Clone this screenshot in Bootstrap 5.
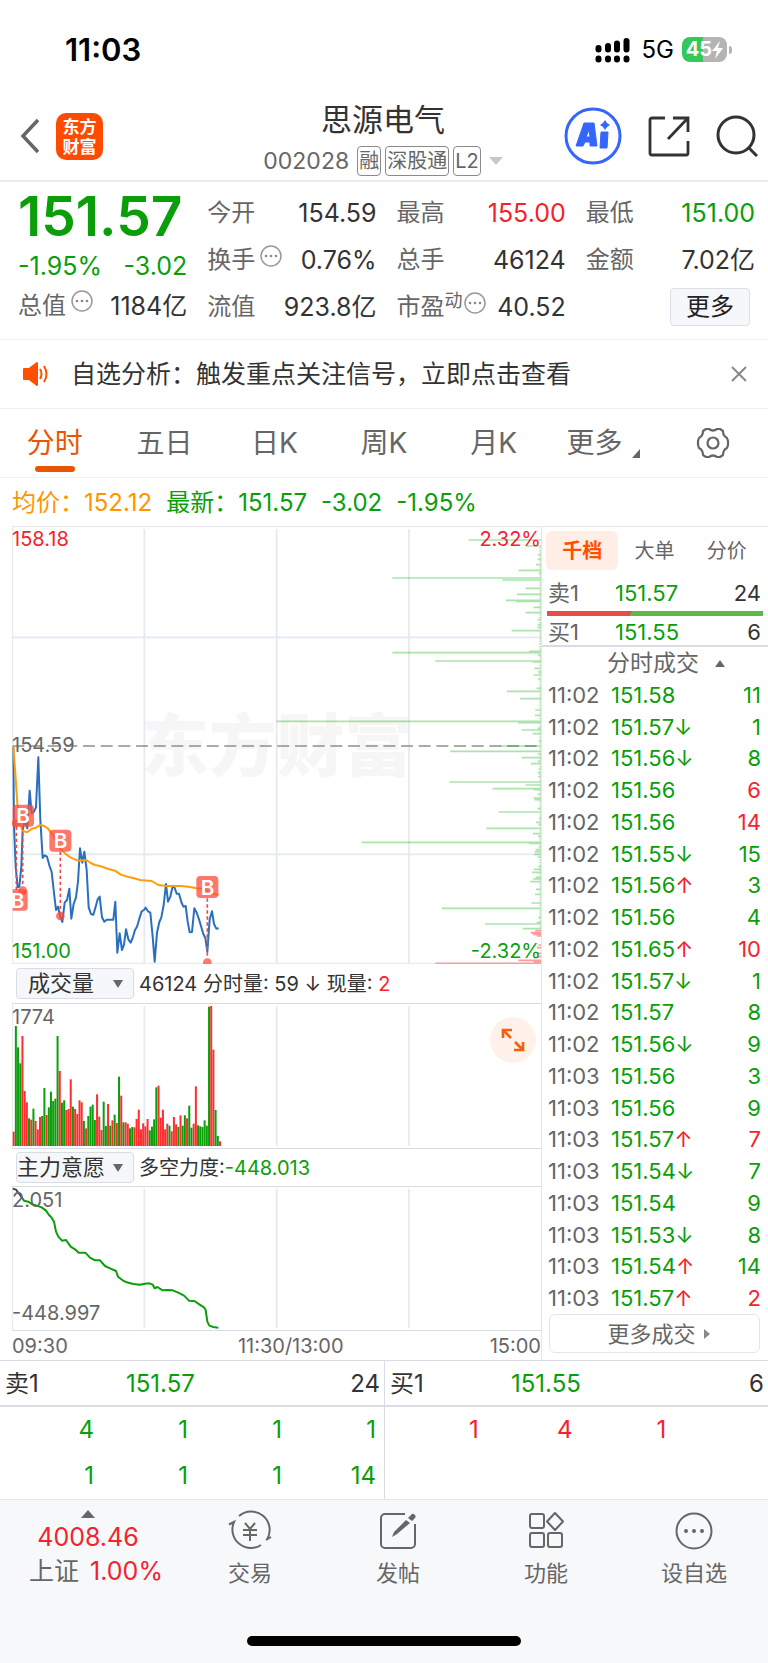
<!DOCTYPE html>
<html lang="zh-CN">
<head>
<meta charset="utf-8">
<meta name="viewport" content="width=device-width, initial-scale=1">
<title>思源电气 002028</title>
<link href="https://cdn.jsdelivr.net/npm/bootstrap@5.3.0/dist/css/bootstrap.min.css" rel="stylesheet">
<style>
:root{--up:#f5222d;--down:#0a9e0a;--ink:#333;--mute:#666;--line:#e3e6ec;--rule:#d9dce3;--brand:#ff5000}
body{font-family:Inter,"Noto Sans CJK SC",sans-serif;color:var(--ink);background:#fff;font-size:24px;line-height:32px}
svg{display:block;flex:none}
button,select{font-family:inherit;color:inherit}
a{color:inherit;text-decoration:none}
.up{color:var(--up)}.down{color:var(--down)}.mute{color:var(--mute)}
.plain{background:none;border:0;padding:0}
.statusbar{height:96px;padding:3px 36px 0 65px;color:#000}
.clock{font-size:31px;font-weight:600}
.batt{width:45px;height:25px;border-radius:8px;background:linear-gradient(90deg,#34c759 46%,#b4b4b4 46%);color:#fff;font-size:20px;font-weight:700;line-height:25px}
.nub{width:3px;height:8px;margin-left:2px;border-radius:0 3px 3px 0;background:#b4b4b4}
.titlebar{height:86px;border-bottom:2px solid #ececec;padding:0 10px 0 20px}
.applogo{width:47px;height:47px;border-radius:10px;background:#ff4a00;color:#fff;font-family:"Noto Sans CJK SC",sans-serif;font-weight:700;font-size:17px;line-height:20px;padding-top:3px;text-align:center}
.side{padding-bottom:4px}
.side-l{width:182px}
.side-r{width:194px}
.stock{font-size:31px;line-height:40px;font-weight:400;margin:0 0 5px}
.sub{font-size:23px;line-height:32px;color:#666}
.tag{border:1px solid #8a8a8a;border-radius:4px;font-size:20px;line-height:28px;padding:0 1px}
.tri-d{border:7px solid transparent;border-top:8px solid #c8c8c8;border-bottom:0}
.quote{padding:7px 13px 9px 18px;display:grid;grid-template-columns:repeat(4,1fr);column-gap:20px;border-bottom:1px solid #eee}
.quote .cell{height:47px;display:flex;align-items:center;justify-content:space-between;white-space:nowrap;font-size:25px}
.quote .cell>span:first-child{font-size:24px;color:var(--mute);display:flex}
.price{font-size:55px;font-weight:600;line-height:54px;height:54px}
.chg{height:46px;font-size:25px;line-height:46px}
.quote .cap{height:41px;line-height:34px;align-items:flex-start}
.sup{font-size:18px;line-height:20px}
.more{width:80px;height:38px;background:#f6f7fa;border:1px solid #dcdfe6;border-radius:4px;font-size:24px;line-height:34px;margin-right:5px;color:#222}
.notice{height:69px;padding:0 20px 0 22px;border-bottom:1px solid #eee;font-size:25px}
.notice a{margin-left:20px}
.periods{height:69px;border-bottom:1px solid #eee}
.periods>*{flex:1 1 0;font-size:28px;color:var(--mute);position:relative}
.periods>.on{color:#ea5504}
.periods>.on::after{content:"";position:absolute;left:50%;bottom:5px;width:40px;height:6px;margin-left:-20px;border-radius:3px;background:#ea5504}
.corner{border-left:8px solid transparent;border-bottom:9px solid #666;margin:20px 0 0 10px}
.legendline{height:48px;padding:2px 0 0 12px;gap:14px}
.panel{width:227px;flex:none;border:1px solid var(--line);border-width:1px 0 0 1px;font-size:22px}
.plot{position:relative;margin-left:12px}
.plot .lab{position:absolute;inset:0;display:flex;flex-direction:column;justify-content:space-between;font-size:20px;line-height:26px;pointer-events:none}
.toolrow{height:40px;border-bottom:1px solid var(--rule);margin-left:12px;padding-left:4px;font-size:20px;white-space:pre}
.toolrow.second{height:39px;border-top:1px solid var(--rule)}
.pick{position:relative;margin-right:5px}
.pick select{appearance:none;display:block;width:118px;height:31px;border:1px solid var(--rule);border-radius:4px;background:#f6f7fa;font-size:22px;line-height:29px;padding:0 28px 0 0;text-align-last:center}
.pick::after{content:"";position:absolute;right:11px;top:12px;border:5px solid transparent;border-top:8px solid #666;border-bottom:0;pointer-events:none}
.zoombtn{position:absolute;right:5px;top:13px;width:46px;height:46px;border-radius:50%;background:#fdf1ea;display:flex;align-items:center;justify-content:center}
.axis{height:30px;border-top:1px solid var(--rule);margin-left:12px;font-size:20px;line-height:30px;color:var(--mute)}
.ptabs{padding:4px 5px 4px 4px}
.ptabs button{flex:1;height:39px;font-size:20px;border-radius:6px;color:var(--mute)}
.ptabs .on{background:#ffeee5;color:var(--brand);font-weight:700}
.lvl{height:37px;padding:0 7px 0 6px;display:grid;grid-template-columns:67px 1fr auto;align-items:center}
.lvl-b{height:31px;border-bottom:2px solid var(--rule)}
.force{height:5px;margin:0 5px;background:linear-gradient(120deg,#e94b4b 39%,#5dba47 39%)}
.tickhead{height:32px;font-size:23px;padding-left:22px}
.ticks{width:100%;height:635px;border-collapse:collapse}
.ticks td{padding:0;line-height:24px;white-space:nowrap}
.ticks td:nth-child(1){padding-left:6px;width:69px;color:var(--mute)}
.ticks td:nth-child(3){padding-right:7px;text-align:right}
.moretick{height:39px;margin:0 7px 7px;border:1px solid var(--line);border-radius:6px;width:211px;color:var(--mute);padding-left:8px}
.book{border-top:1px solid var(--rule)}
.book>div+div{border-left:1px solid var(--rule)}
.bookhead{height:46px;padding:2px 4px 0 5px;border-bottom:2px solid var(--rule);display:grid;grid-template-columns:121px 1fr auto;align-items:center}
.lots{display:grid;grid-template-columns:repeat(4,1fr);padding-right:8px;text-align:right;line-height:46px;height:92px}
.dock{background:#f7f8fa;border-top:1px solid var(--line);height:164px;position:relative}
.dock a{flex:1;font-size:22px;line-height:32px;color:var(--mute);text-align:center;padding-top:10px}
.dock a.idx{flex:0 0 176px;font-size:25px;line-height:34px}
.idx svg{margin:0 auto 2px}
.dock .ic{margin:0 auto 5px}
.homebar{position:absolute;left:50%;bottom:17px;width:274px;height:10px;margin-left:-137px;border-radius:5px;background:#000}
</style>
</head>
<body>
<header>
  <div class="statusbar d-flex align-items-center justify-content-between">
    <span class="clock">11:03</span>
    <div class="d-flex align-items-center">
      <svg width="35" height="26" viewBox="0 0 35 26"><path d="M3.500 11v1.500M13 9v3.500M22 6.500v6M31.500 4v8.500M3.500 21.500v1M13 21.500v1M22 21.500v1M31.500 21.500v1" stroke="#000" stroke-width="6" stroke-linecap="round"/></svg>
      <span class="ms-2 me-2 ps-1">5G</span>
      <span class="batt d-flex align-items-center justify-content-center">45<svg width="11" height="18" viewBox="0 0 11 18"><path d="M8 0L0 10h5L3 18l8-11H6z" fill="#fff"/></svg></span><span class="nub"></span>
    </div>
  </div>
  <div class="titlebar d-flex align-items-center justify-content-between">
    <div class="side side-l d-flex align-items-center">
      <button class="plain" aria-label="返回"><svg width="20" height="36" viewBox="0 0 20 36"><path d="M18 2L3 18l15 16" fill="none" stroke="#666" stroke-width="3.500"/></svg></button>
      <a href="#" class="applogo ms-3">东方<br>财富</a>
    </div>
    <div class="text-center">
      <h1 class="stock">思源电气</h1>
      <div class="sub d-flex align-items-center"><span class="me-2">002028</span><span class="tag me-1">融</span><span class="tag me-1">深股通</span><span class="tag">L2</span><span class="tri-d ms-2"></span></div>
    </div>
    <div class="side side-r d-flex align-items-center justify-content-between">
      <button class="plain" aria-label="Ai"><svg width="58" height="58" viewBox="0 0 58 58"><circle cx="29" cy="29" r="27" fill="#fff" stroke="#3366ff" stroke-width="3"/><path d="M20 16h10l3 23h-7v-4h-5l-2 4h-7zM25 23l-3 7h4z" fill="#3366ff" fill-rule="evenodd" stroke="#3366ff" stroke-linejoin="round"/><path d="M37 25h7l-1 16h-7z" fill="#3366ff" stroke="#3366ff" stroke-linejoin="round"/><path d="M41 13l2 3 3 2-3 2-2 3-2-3-3-2 3-2z" fill="#3366ff"/></svg></button>
      <button class="plain" aria-label="分享"><svg width="42" height="42" viewBox="0 0 42 42"><path d="M17 3H4a2 2 0 0 0-2 2v33a2 2 0 0 0 2 2h34a2 2 0 0 0 2-2V26M20 24L39 4M25 3h15v14" fill="none" stroke="#333" stroke-width="2.800"/></svg></button>
      <button class="plain" aria-label="搜索"><svg width="42" height="42" viewBox="0 0 42 42"><g fill="none" stroke="#333" stroke-width="3"><circle cx="20" cy="20" r="18"/><path d="M32 32l9 9"/></g></svg></button>
    </div>
  </div>
</header>
<main>
  <section class="quote">
    <div>
      <div class="price down">151.57</div>
      <div class="chg down d-flex justify-content-between"><span>-1.95%</span><span>-3.02</span></div>
      <div class="cell cap"><span>总值<svg class="ms-1" width="24" height="24" viewBox="0 0 24 24"><use href="#dots"/></svg></span><span>1184亿</span></div>
    </div>
    <div>
      <div class="cell"><span>今开</span><span>154.59</span></div>
      <div class="cell"><span>换手<svg class="ms-1" width="24" height="24" viewBox="0 0 24 24"><use href="#dots"/></svg></span><span>0.76%</span></div>
      <div class="cell"><span>流值</span><span>923.8亿</span></div>
    </div>
    <div>
      <div class="cell"><span>最高</span><span class="up">155.00</span></div>
      <div class="cell"><span>总手</span><span>46124</span></div>
      <div class="cell"><span>市盈<span class="sup">动</span><svg width="24" height="24" viewBox="0 0 24 24"><use href="#dots"/></svg></span><span>40.52</span></div>
    </div>
    <div>
      <div class="cell"><span>最低</span><span class="down">151.00</span></div>
      <div class="cell"><span>金额</span><span>7.02亿</span></div>
      <div class="cell justify-content-end"><button class="more p-0">更多</button></div>
    </div>
  </section>

  <section class="notice d-flex align-items-center">
    <svg width="29" height="26" viewBox="0 0 29 26"><path d="M2 8h5l8-6v22l-8-6H2z" fill="#ff5000" stroke="#ff5000" stroke-width="2" stroke-linejoin="round"/><path d="M18 8q3 5 0 10M22 5q5 8 0 16" fill="none" stroke="#ff5000" stroke-width="2"/></svg>
    <a href="#" class="flex-grow-1">自选分析：触发重点关注信号，立即点击查看</a>
    <button class="plain" aria-label="关闭"><svg width="18" height="18" viewBox="0 0 18 18"><path d="M2 2l14 14M16 2L2 16" stroke="#888" stroke-width="2"/></svg></button>
  </section>

  <nav class="periods d-flex">
    <button class="plain on">分时</button><button class="plain">五日</button><button class="plain">日K</button><button class="plain">周K</button><button class="plain">月K</button>
    <button class="plain d-flex align-items-center justify-content-center">更多<span class="corner"></span></button>
    <button class="plain d-flex align-items-center justify-content-center" aria-label="设置"><svg width="34" height="32" viewBox="0 0 34 32"><g fill="none" stroke="#666" stroke-width="2.200" stroke-linejoin="round"><path d="M10 2h3q4 3 8 0h3l3 2q0 5 4 7l1 3v4l-1 3q-4 2-4 7l-3 2h-3q-4-3-8 0h-3l-3-2q0-5-4-7l-1-3v-4l1-3q4-2 4-7z"/><circle cx="17" cy="16" r="5.500"/></g></svg></button>
  </nav>

  <div class="legendline d-flex align-items-center down"><span style="color:#ff9500">均价：152.12</span><span>最新：151.57</span><span>-3.02</span><span>-1.95%</span></div>

  <div class="d-flex">
    <div class="flex-grow-1">
      <div class="plot">
        <svg class="w-100" viewBox="36 18 1587 1314">
          <g stroke="#e4e8f0" stroke-width="5" fill="none"><path d="M433 27V1330M830 27V1330M1227 27V1330M38 352H1623M38 1003H1623"/><path d="M36 20H1623M38 20V1332M36 1330H1623" stroke="#e6e6e8" stroke-width="3"/></g>
          <text x="424" y="752" font-size="203" font-weight="900" font-family="Noto Sans CJK SC" fill="#999" fill-opacity=".09">东方财富</text>
          <path d="M38 678H1623" stroke="#8e8e8e" stroke-width="5" stroke-dasharray="36 17" stroke-dashoffset="1"/>
          <g id="depth" stroke-width="5"></g>
          <g fill="none" stroke-width="6" stroke-linejoin="round">
            <polyline stroke="#2a6fbf" points="40,680 42,920 47,1040 53,1102 58,1100 64,1040 68,930 74,900 82,925 89,812 95,880 102,875 108,862 115,712 121,900 128,1014 134,1006 141,1010 148,1036 155,1056 161,1110 168,1170 174,1160 181,1190 187,1206 194,1148 201,1140 208,1106 214,1196 221,1152 228,1132 234,1085 240,985 247,1028 253,995 260,1050 266,1162 273,1182 280,1184 287,1160 293,1138 299,1130 306,1192 313,1205 320,1199 340,1199 346,1145 352,1298 359,1240 366,1290 372,1274 378,1228 385,1258 392,1268 398,1254 405,1230 411,1220 418,1196 425,1174 432,1170 437,1163 444,1174 451,1178 458,1250 464,1325 471,1238 478,1206 484,1192 491,1155 498,1092 504,1145 511,1130 517,1103 523,1101 530,1121 537,1121 544,1146 550,1160 557,1158 563,1205 569,1237 576,1236 583,1165 590,1178 597,1198 604,1222 610,1242 616,1254 622,1295 629,1198 636,1174 642,1212 649,1226 656,1225"/>
            <polyline stroke="#ff9d0a" points="40,680 46,760 52,850 60,910 68,932 80,937 88,932 95,926 108,923 120,915 130,917 142,924 155,940 168,962 180,985 195,1000 212,1013 234,1022 258,1020 272,1029 285,1035 300,1038 325,1047 345,1052 362,1064 385,1071 400,1074 420,1080 455,1083 475,1095 500,1098 545,1098 570,1101 590,1105 610,1107 630,1118 656,1125"/>
            <path d="M49 920V1110M68 920V1100M181 995V1180M622 1135V1315" stroke="#ee4a40" stroke-width="5" stroke-dasharray="10 8"/>
          </g>
          <g fill="#ff4a3a" fill-opacity=".75"><circle cx="47" cy="910" r="12"/><circle cx="68" cy="1112" r="13"/><circle cx="181" cy="1188" r="13"/><circle cx="622" cy="1328" r="13"/>
            <rect x="38" y="854" width="64" height="66" rx="12"/><rect x="148" y="929" width="66" height="66" rx="12"/><rect x="589" y="1068" width="66" height="66" rx="12"/><path d="M38 1108H72a11 11 0 0 1 11 11V1161a11 11 0 0 1-11 11H38z"/></g>
          <g fill="#fff" font-family="Inter" font-size="62" font-weight="600" text-anchor="middle"><text x="69" y="910">B</text><text x="182" y="985">B</text><text x="623" y="1124">B</text><text x="53" y="1163">B</text></g>
        </svg>
        <div class="lab"><div class="d-flex justify-content-between up"><span>158.18</span><span>2.32%</span></div><div class="mute">154.59</div><div class="d-flex justify-content-between down"><span>151.00</span><span>-2.32%</span></div></div>
      </div>
      <div class="toolrow d-flex align-items-center"><label class="pick" aria-label="指标一"><select><option>成交量</option></select></label><span>46124 分时量: 59 ↓ 现量: <span class="up">2</span></span></div>
      <div class="plot">
        <svg class="w-100" viewBox="36 132 1587 432">
          <path d="M433 139V558M830 139V558M1227 139V558" stroke="#e4e8f0" stroke-width="5"/><path d="M38 132V564" stroke="#e6e6e8" stroke-width="3"/>
          <g id="vol"></g>
        </svg>
        <div class="lab mute"><span>1774</span></div>
        <button class="plain zoombtn" aria-label="全屏"><svg width="24" height="24" viewBox="0 0 24 24"><path d="M2 10V2h9M3 3l7 7M22 14v8h-9M21 21l-7-7" fill="none" stroke="#f26110" stroke-width="2.600"/></svg></button>
      </div>
      <div class="toolrow second d-flex align-items-center"><label class="pick" aria-label="指标二"><select><option>主力意愿</option></select></label><span>多空力度:<span class="down">-448.013</span></span></div>
      <div class="plot">
        <svg class="w-100" viewBox="36 681 1587 429">
          <path d="M433 686V1105M830 686V1105M1227 686V1105" stroke="#e4e8f0" stroke-width="5"/><path d="M38 681V1110" stroke="#e6e6e8" stroke-width="3"/>
          <g fill="none" stroke-width="6" stroke-linejoin="round"><polyline stroke="#444" points="38,686 48,689 60,705 68,716"/><polyline stroke="#0a9e0a" points="68,716 72,722 85,725 95,732 110,737 125,742 138,752 147,765 155,773 162,785 168,815 175,830 186,842 198,840 212,860 225,868 236,878 256,878 270,893 285,901 300,901 315,918 330,925 348,933 354,950 368,961 380,967 400,972 420,974 435,971 448,970 458,974 464,985 472,981 488,991 502,990 518,991 535,998 552,1007 567,1022 583,1023 598,1033 612,1042 617,1050 622,1085 628,1097 640,1101 655,1103"/></g>
        </svg>
        <div class="lab pb-1 mute"><span>2.051</span><span>-448.997</span></div>
      </div>
      <div class="axis d-flex justify-content-between"><span>09:30</span><span class="ms-4">11:30/13:00</span><span>15:00</span></div>
    </div>

    <aside class="panel">
      <div class="ptabs d-flex"><button class="plain on">千档</button><button class="plain">大单</button><button class="plain">分价</button></div>
      <div class="lvl"><span class="mute">卖1</span><span class="down">151.57</span><span>24</span></div>
      <div class="force"></div>
      <div class="lvl lvl-b"><span class="mute">买1</span><span class="down">151.55</span><span>6</span></div>
      <button class="plain tickhead w-100 d-flex align-items-center justify-content-center mute">分时成交<svg class="ms-3" width="10" height="7" viewBox="0 0 10 7"><path d="M5 0l5 7H0z" fill="#666"/></svg></button>
      <table class="ticks"><tbody id="ticks"></tbody></table>
      <button class="plain moretick d-flex align-items-center justify-content-center">更多成交<svg class="ms-2" width="6" height="10" viewBox="0 0 6 10"><path d="M0 0l6 5-6 5z" fill="#888"/></svg></button>
    </aside>
  </div>

  <section class="book d-flex">
    <div class="w-50"><div class="bookhead"><span>卖1</span><span class="down">151.57</span><span>24</span></div>
      <div class="lots down"><span>4</span><span>1</span><span>1</span><span>1</span><span>1</span><span>1</span><span>1</span><span>14</span></div></div>
    <div class="w-50"><div class="bookhead"><span>买1</span><span class="down">151.55</span><span>6</span></div>
      <div class="lots up"><span>1</span><span>4</span><span>1</span></div></div>
  </section>
</main>

<nav class="dock d-flex">
  <a href="#" class="idx"><svg width="14" height="8" viewBox="0 0 14 8"><path d="M7 0l7 8H0z" fill="#666"/></svg><div class="up">4008.46</div><div class="text-nowrap ps-3">上证 <span class="up ms-1">1.00%</span></div></a>
  <a href="#"><svg class="ic" width="44" height="42" viewBox="0 0 44 42"><g fill="none" stroke="#666" stroke-width="2"><path d="M11 6A18.500 18.500 0 0 1 39 29.500M43 27l-5 3M33 35A18.500 18.500 0 0 1 6 12l-5 2.500M17 13l5 6 5-6M22 19v12M15 20h14M15 25h14"/></g></svg>交易</a>
  <a href="#"><svg class="ic" width="42" height="42" viewBox="0 0 42 42"><path d="M28 4H8a4 4 0 0 0-4 4v26a4 4 0 0 0 4 4h26a4 4 0 0 0 4-4V14" fill="none" stroke="#666" stroke-width="2"/><path d="M15 27l2-5L29 10l4 3-13 11zM31 8l3-3a2.500 2.500 0 0 1 4 3l-3 3z" fill="#666"/></svg>发帖</a>
  <a href="#"><svg class="ic" width="42" height="42" viewBox="0 0 42 42"><g fill="none" stroke="#666" stroke-width="2"><rect x="5" y="4" width="14" height="14" rx="2"/><rect x="5" y="23" width="14" height="14" rx="2"/><rect x="23" y="23" width="14" height="14" rx="2"/><path d="M30 3l8 8.500-8 8.500-8-8.500z" stroke-linejoin="round"/></g></svg>功能</a>
  <a href="#"><svg class="ic" width="42" height="42" viewBox="0 0 42 42"><circle cx="21" cy="21" r="17.500" fill="none" stroke="#666" stroke-width="2"/><g fill="#666"><circle cx="13" cy="21" r="2"/><circle cx="21" cy="21" r="2"/><circle cx="29" cy="21" r="2"/></g></svg>设自选</a>
  <span class="homebar"></span>
</nav>

<svg width="0" height="0" class="position-absolute"><symbol id="dots" viewBox="0 0 24 24"><circle cx="12" cy="12" r="10" fill="none" stroke="#999" stroke-width="1.500"/><circle cx="7" cy="12" r="1.300" fill="#888"/><circle cx="12" cy="12" r="1.300" fill="#888"/><circle cx="17" cy="12" r="1.300" fill="#888"/></symbol></svg>

<script src="https://cdn.jsdelivr.net/npm/bootstrap@5.3.0/dist/js/bootstrap.bundle.min.js"></script>
<script>
// trades: minute, price, direction, lots, side
const trades = `02 58 - 11 g|02 57 d 1 g|02 56 d 8 g|02 56 - 6 r|02 56 - 14 r|02 55 d 15 g|02 56 u 3 g|02 56 - 4 g|02 65 u 10 r|02 57 d 1 g|02 57 - 8 g|02 56 d 9 g|03 56 - 3 g|03 56 - 9 g|03 57 u 7 r|03 54 d 7 g|03 54 - 9 g|03 53 d 8 g|03 54 u 14 g|03 57 u 2 r`;
document.getElementById('ticks').innerHTML = trades.split('|').map(t => {
  const [m, p, d, q, s] = t.split(' ');
  const arrow = d === 'u' ? '<span class="up">↑</span>' : d === 'd' ? '↓' : '';
  return `<tr><td>11:${m}</td><td class="down">151.${p}${arrow}</td><td class="${s === 'r' ? 'up' : 'down'}">${q}</td></tr>`;
}).join('');

// volume per minute: colour and bar top
const vol = 'r515 g198 g262 g310 r228 r393 r427 g475 r479 g446 r483 r508 r471 g468 g384 r465 g442 g395 g423 g416 g228 r333 g428 g421 r450 r447 r358 g440 r447 r462 r421 r427 g483 r505 g468 g440 g434 g480 r403 r470 r510 g425 g498 r432 g497 r481 g464 r489 g350 r407 g487 r487 r491 g505 g501 r502 r477 r449 r508 r490 r499 r477 g511 g500 g478 g382 r377 r473 r449 r508 r491 g497 r514 r471 r493 g501 r466 g497 g466 r475 g437 g503 r491 r379 g496 g499 g501 g481 g497 g140 r138 r269 g450 g528 r544'.split(' ');
document.getElementById('vol').innerHTML = vol.map((v, i) =>
  `<rect x="${(38 + i * 6.585).toFixed(1)}" y="${v.slice(1)}" width="6" height="${558 - v.slice(1)}" fill="${v[0] === 'r' ? '#ff2d2d' : '#0a9e0a'}"/>`).join('');

// resting orders by price level: y:left edge
const asks = '60:596 78:768 105:803 118:803 134:798 151:746 159:806 174:367 180:697 205:767 223:741 241:708 244:737 262:791 278:767 299:803 314:803 322:802 332:725 394:777 398:367 405:803 423:496 426:788 445:793 456:804 465:791 477:804 505:800 514:711 536:750 570:796 586:795 604:20 608:744 625:803 630:755 641:788 663:806 678:690 694:541 702:803 713:755 724:803 731:783 747:806 758:803 770:805 786:539 795:767 806:668 809:790 822:803 834:790 839:794 866:803 876:687 895:808 907:798 914:806 925:649 941:789 949:804 967:275 970:777 980:806 989:797 995:794 1003:793 1011:803 1040:805 1048:791 1057:786 1072:797 1077:789 1085:781 1108:798 1123:795 1149:784 1165:516 1192:805 1208:800 1212:645 1226:758';
const bids = '1232:796 1238:782 1243:788 1248:800 1275:805 1283:801 1300:800 1310:803 1321:745 1326:790 1330:496';
const lines = (s, c, o) => `<path stroke="${c}" stroke-opacity="${o}" d="${s.split(' ').map(v => { const [y, x] = v.split(':'); return `M${+x + 810} ${y}H1623`; }).join('')}"/>`;
const small = [];
for (let y = 84; y < 1226; y += 8) small.push(`${y}:${808 + (y * 7) % 4}`);
document.getElementById('depth').innerHTML = lines(asks, '#0a0', .33) + lines(small.join(' '), '#b5e2b5', 1) + lines(bids, '#ff9c9c', 1);
</script>
</body>
</html>
